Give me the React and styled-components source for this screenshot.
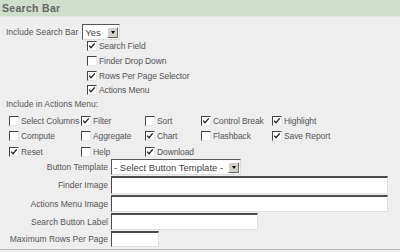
import React from 'react';
import styled, { createGlobalStyle } from 'styled-components';

const GlobalStyle = createGlobalStyle`
  html, body {
    margin: 0;
    padding: 0;
    background: #eeeeee;
  }
  body {
    font-family: "Liberation Sans", Arial, sans-serif;
    font-size: 8.5px;
    color: #555555;
  }
`;

const Panel = styled.div`
  width: 400px;
  height: 250px;
  background: #eeeeee;
  box-sizing: border-box;
  border-bottom: 1px solid #b8b8b8;
`;

const Header = styled.div`
  height: 16px;
  background: #cfdecb;
  border-bottom: 1px solid #e4e8e3;
  display: flex;
  align-items: center;
  padding-left: 2px;
  font-weight: bold;
  font-size: 10.5px;
  color: #666666;
  letter-spacing: 0.3px;
`;

const Body = styled.div`
  padding: 7px 0 0 6px;
`;

const InlineRow = styled.div`
  display: flex;
  align-items: center;
  gap: 4px;
  height: 16px;
`;

const Select = styled.div`
  display: flex;
  align-items: center;
  box-sizing: border-box;
  height: 16px;
  width: ${(p) => p.width}px;
  background: #ffffff;
  border-top: 1px solid #555;
  border-left: 1px solid #555;
  border-right: 1px solid #ddd;
  border-bottom: 1px solid #ddd;
  padding-left: 2px;
  font-size: 9.5px;
  color: #444;
  white-space: nowrap;
  justify-content: space-between;
`;

const Arrow = styled.span`
  width: 11px;
  height: 11px;
  margin-right: 1px;
  background: #d4d0c8;
  border: 1px solid #fff;
  border-right-color: #666;
  border-bottom-color: #666;
  box-sizing: border-box;
  display: flex;
  align-items: center;
  justify-content: center;
  flex: none;
  &::after {
    content: '';
    border-left: 2.5px solid transparent;
    border-right: 2.5px solid transparent;
    border-top: 3px solid #000;
  }
`;

const CheckList = styled.div`
  display: flex;
  flex-direction: column;
  padding-left: 81px;
  margin-top: -1px;
`;

const CheckItem = styled.label`
  display: flex;
  align-items: center;
  gap: 2px;
  height: ${(p) => p.h}px;
  white-space: nowrap;
  letter-spacing: -0.1px;
`;

const Box = styled.span`
  width: 10px;
  height: 10px;
  box-sizing: border-box;
  background: #fff;
  border-top: 1px solid #444;
  border-left: 1px solid #444;
  border-right: 1px solid #e6e6e6;
  border-bottom: 1px solid #e6e6e6;
  display: inline-flex;
  align-items: center;
  justify-content: center;
  flex: none;
`;

const Caption = styled.div`
  height: 12px;
  display: flex;
  align-items: center;
`;

const Grid = styled.div`
  display: grid;
  grid-template-columns: 72px 64px 56px 71px auto;
  padding-left: 3px;
  margin-top: 3px;
`;

const Form = styled.div`
  display: grid;
  grid-template-columns: 102px auto;
  column-gap: 3px;
  row-gap: 1px;
`;

const Label = styled.div`
  display: flex;
  align-items: center;
  justify-content: flex-end;
  white-space: nowrap;
`;

const Input = styled.div`
  box-sizing: border-box;
  width: ${(p) => p.width}px;
  height: ${(p) => p.height || 17}px;
  background: #ffffff;
  border-top: 2px solid #4a4a4a;
  border-left: 1px solid #4a4a4a;
  border-right: 1px solid #e0e0e0;
  border-bottom: 1px solid #e0e0e0;
`;

function Check({ on, h = 14.7, children }) {
  return (
    <CheckItem h={h}>
      <Box>
        {on && (
          <svg width="8" height="8" viewBox="0 0 8 8">
            <path d="M1.2 3.6 L3 5.6 L6.8 1.4" stroke="#222" strokeWidth="1.4" fill="none" />
          </svg>
        )}
      </Box>
      {children}
    </CheckItem>
  );
}

const actions = [
  ['Select Columns', false], ['Filter', true], ['Sort', false], ['Control Break', true], ['Highlight', true],
  ['Compute', false], ['Aggregate', false], ['Chart', true], ['Flashback', false], ['Save Report', true],
  ['Reset', true], ['Help', false], ['Download', true],
];

export default function App() {
  return (
    <>
      <GlobalStyle />
      <Panel>
        <Header>Search Bar</Header>
        <Body>
          <InlineRow>
            Include Search Bar
            <Select width={38}>
              Yes
              <Arrow />
            </Select>
          </InlineRow>
          <CheckList>
            <Check on>Search Field</Check>
            <Check>Finder Drop Down</Check>
            <Check on>Rows Per Page Selector</Check>
            <Check on>Actions Menu</Check>
          </CheckList>
          <Caption>Include in Actions Menu:</Caption>
          <Grid>
            {actions.map(([name, on]) => (
              <Check key={name} on={on} h={15.5}>{name}</Check>
            ))}
          </Grid>
          <Form>
            <Label>Button Template</Label>
            <Select width={130}>
              - Select Button Template -
              <Arrow />
            </Select>
            <Label>Finder Image</Label>
            <Input width={277} height={18} />
            <Label>Actions Menu Image</Label>
            <Input width={277} />
            <Label>Search Button Label</Label>
            <Input width={147} />
            <Label>Maximum Rows Per Page</Label>
            <Input width={48} height={16} />
          </Form>
        </Body>
      </Panel>
    </>
  );
}
